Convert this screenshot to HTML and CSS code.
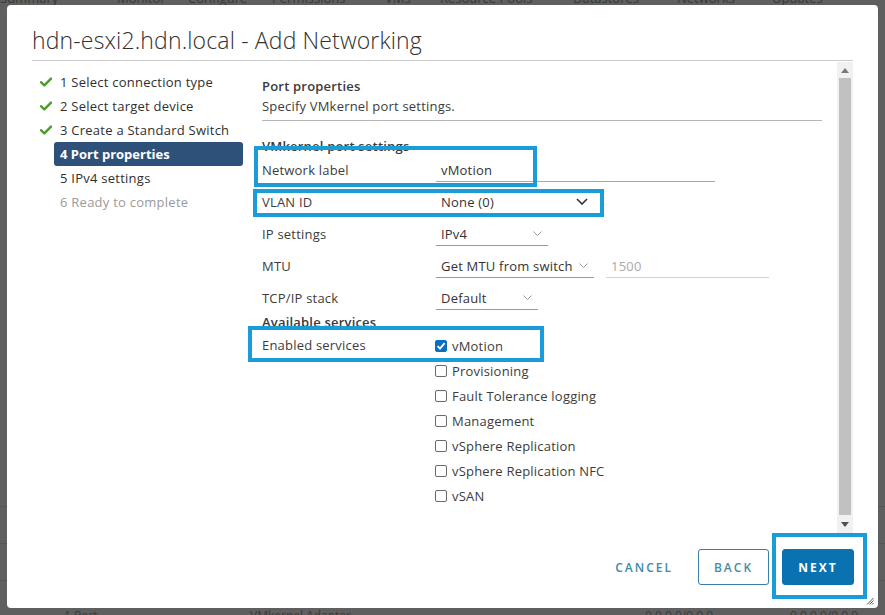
FILE: index.html
```html
<!DOCTYPE html>
<html>
<head>
<meta charset="utf-8">
<link rel="stylesheet" href="styles.css">
</head>
<body>
<div class="page">
  <div class="tabs">
    <span class="t1">Summary</span><span class="t2">Monitor</span><span class="t3">Configure</span><span class="t4">Permissions</span><span class="t5">VMs</span><span class="t6">Resource Pools</span><span class="t7">Datastores</span><span class="t8">Networks</span><span class="t9">Updates</span>
  </div>
  <div class="bg-rows">
    <div class="bg-row"></div>
    <div class="bg-row"></div>
    <div class="bg-row"></div>
  </div>
  <div class="bottom-strip">
    <span class="b1">1 Port...</span><span class="b2">VMkernel Adapter</span><span class="b3">0.0.0.0/0.0.0</span><span class="b4">0.0.0.0/0.0.0</span>
  </div>
</div>

<div class="dialog">
  <header class="dlg-head">
    <h1>hdn-esxi2.hdn.local - Add Networking</h1>
  </header>

  <div class="dlg-body">
    <nav class="steps">
      <div class="step done"><span class="chk"><svg viewBox="0 0 12 10" width="12" height="10"><path d="M1 5.2 L4.4 8.4 L11 1.6" fill="none" stroke="#4d9a2f" stroke-width="2.4" stroke-linecap="round" stroke-linejoin="round"/></svg></span><span class="lbl">1 Select connection type</span></div>
      <div class="step done"><span class="chk"><svg viewBox="0 0 12 10" width="12" height="10"><path d="M1 5.2 L4.4 8.4 L11 1.6" fill="none" stroke="#4d9a2f" stroke-width="2.4" stroke-linecap="round" stroke-linejoin="round"/></svg></span><span class="lbl">2 Select target device</span></div>
      <div class="step done"><span class="chk"><svg viewBox="0 0 12 10" width="12" height="10"><path d="M1 5.2 L4.4 8.4 L11 1.6" fill="none" stroke="#4d9a2f" stroke-width="2.4" stroke-linecap="round" stroke-linejoin="round"/></svg></span><span class="lbl">3 Create a Standard Switch</span></div>
      <div class="step active"><span class="chk"></span><span class="lbl">4 Port properties</span></div>
      <div class="step"><span class="chk"></span><span class="lbl">5 IPv4 settings</span></div>
      <div class="step disabled"><span class="chk"></span><span class="lbl">6 Ready to complete</span></div>
    </nav>

    <div class="pane">
      <div class="scroll">
        <div class="sec-title">Port properties</div>
        <div class="sec-desc">Specify VMkernel port settings.</div>

        <div class="group-title">VMkernel port settings</div>
        <div class="form-row">
          <div class="flabel">Network label</div>
          <div class="fval"><div class="input w-net">vMotion</div></div>
        </div>
        <div class="form-row">
          <div class="flabel">VLAN ID</div>
          <div class="fval"><div class="select w-vlan dark">None (0)<svg viewBox="0 0 12 7" width="12" height="7"><path d="M1 1 L6 6 L11 1" fill="none" stroke="#333" stroke-width="1.6"/></svg></div></div>
        </div>
        <div class="form-row">
          <div class="flabel">IP settings</div>
          <div class="fval"><div class="select w-ip">IPv4<svg viewBox="0 0 9 5" width="9" height="5"><path d="M0.5 0.5 L4.5 4.5 L8.5 0.5" fill="none" stroke="#9a9a9a" stroke-width="1"/></svg></div></div>
        </div>
        <div class="form-row">
          <div class="flabel">MTU</div>
          <div class="fval">
            <div class="select w-mtu">Get MTU from switch<svg viewBox="0 0 9 5" width="9" height="5"><path d="M0.5 0.5 L4.5 4.5 L8.5 0.5" fill="none" stroke="#9a9a9a" stroke-width="1"/></svg></div>
            <div class="input w-num muted">1500</div>
          </div>
        </div>
        <div class="form-row">
          <div class="flabel">TCP/IP stack</div>
          <div class="fval"><div class="select w-tcp">Default<svg viewBox="0 0 9 5" width="9" height="5"><path d="M0.5 0.5 L4.5 4.5 L8.5 0.5" fill="none" stroke="#9a9a9a" stroke-width="1"/></svg></div></div>
        </div>

        <div class="group-title second">Available services</div>
        <div class="services">
          <div class="flabel svc-label">Enabled services</div>
          <div class="svc-list">
            <label class="cb"><span class="box checked"><svg viewBox="0 0 12 12" width="12" height="12"><path d="M2.6 6.2 L5 8.6 L9.6 3.2" fill="none" stroke="#fff" stroke-width="1.8"/></svg></span>vMotion</label>
            <label class="cb"><span class="box"></span>Provisioning</label>
            <label class="cb"><span class="box"></span>Fault Tolerance logging</label>
            <label class="cb"><span class="box"></span>Management</label>
            <label class="cb"><span class="box"></span>vSphere Replication</label>
            <label class="cb"><span class="box"></span>vSphere Replication NFC</label>
            <label class="cb"><span class="box"></span>vSAN</label>
          </div>
        </div>
      </div>
      <div class="scrollbar">
        <div class="sb-arrow"><svg viewBox="0 0 8 5" width="8" height="5"><path d="M0 5 L4 0 L8 5 Z" fill="#7a7a7a"/></svg></div>
        <div class="sb-thumb"></div>
        <div class="sb-arrow down"><svg viewBox="0 0 8 5" width="8" height="5"><path d="M0 0 L4 5 L8 0 Z" fill="#505050"/></svg></div>
      </div>
    </div>
  </div>

  <footer class="dlg-foot">
    <button class="btn link">CANCEL</button>
    <button class="btn outline">BACK</button>
    <button class="btn primary">NEXT</button>
  </footer>

  <div class="grip"><svg viewBox="0 0 8 8" width="8" height="8"><path d="M7.5 1 L1 7.5 M7.5 3.5 L3.5 7.5 M7.5 6 L6 7.5" stroke="#555" stroke-width="1"/></svg></div>

  <div class="callout c1"></div>
  <div class="callout c2"></div>
  <div class="callout c3"></div>
  <div class="callout c4"></div>
</div>
</body>
</html>
```

FILE: styles.css
```css
html, body {
  margin: 0;
  padding: 0;
  width: 885px;
  height: 615px;
  overflow: hidden;
  font-family: "Open Sans", "Noto Sans", sans-serif;
}

body {
  position: relative;
  background: #5e5e5e;
}

/* dimmed page behind the modal */
.page {
  position: absolute;
  inset: 0;
  background: #5f5f5f;
}

.tabs {
  position: absolute;
  top: -10px;
  left: 0;
  height: 16px;
  font-size: 13px;
  line-height: 16px;
  color: #383838;
  white-space: nowrap;
}
.tabs span { position: absolute; top: 0; }
.t1 { left: 0; }
.t2 { left: 117px; }
.t3 { left: 188px; }
.t4 { left: 272px; }
.t5 { left: 385px; }
.t6 { left: 440px; }
.t7 { left: 573px; }
.t8 { left: 677px; }
.t9 { left: 772px; }

.bg-rows {
  position: absolute;
  left: 0;
  top: 470px;
  width: 885px;
}
.bg-row {
  height: 36px;
  border-bottom: 1px solid #555;
}

.bottom-strip {
  position: absolute;
  left: 0;
  top: 607px;
  width: 885px;
  font-size: 12px;
  line-height: 14px;
  color: #3a3a3a;
  white-space: nowrap;
}
.bottom-strip span { position: absolute; top: 2px; }
.b1 { left: 64px; }
.b2 { left: 250px; }
.b3 { left: 645px; }
.b4 { left: 790px; }

/* dialog */
.dialog {
  position: absolute;
  left: 7px;
  top: 5px;
  width: 871px;
  height: 603px;
  background: #fff;
  border-radius: 4px;
  display: flex;
  flex-direction: column;
  box-sizing: border-box;
}

.dlg-head {
  margin: 0 25px;
  padding-top: 21px;
  padding-bottom: 5px;
  border-bottom: 1px solid #cccccc;
}
.dlg-head h1 {
  margin: 0;
  font-size: 23px;
  line-height: 29px;
  font-weight: 300;
  letter-spacing: 0.15px;
  color: #313131;
}

.dlg-body {
  display: flex;
  height: 472px;
}

/* step navigation */
.steps {
  margin-left: 33px;
  width: 203px;
  padding-top: 9px;
  flex-shrink: 0;
}
.step {
  display: flex;
  align-items: center;
  height: 24px;
}
.chk {
  width: 14px;
  display: flex;
  align-items: center;
  flex-shrink: 0;
}
.lbl {
  flex: 1;
  height: 24px;
  line-height: 24px;
  padding-left: 6px;
  font-size: 13px;
  font-weight: 500;
  letter-spacing: 0.25px;
  color: #2f2f2f;
  border-radius: 3px;
  white-space: nowrap;
}
.step.active .lbl {
  background: #2e5179;
  color: #fff;
  font-weight: 700;
  letter-spacing: 0;
}
.step.disabled .lbl {
  color: #9a9a9a;
}

/* main pane */
.pane {
  display: flex;
  flex: 1;
  margin-left: 19px;
  margin-right: 25px;
  margin-top: 1px;
  height: 471px;
}
.scroll {
  flex: 1;
  padding-top: 14px;
  padding-right: 15px;
  color: #3c3c3c;
  font-size: 13px;
  letter-spacing: 0.2px;
}

.sec-title {
  line-height: 20px;
  font-weight: 600;
  color: #3a3a3a;
}
.sec-desc {
  line-height: 20px;
  padding-bottom: 4px;
  border-bottom: 1px solid #b5b5b5;
  color: #3c3c3c;
}
.group-title {
  margin-top: 17px;
  line-height: 16px;
  height: 16px;
  font-weight: 600;
  color: #3a3a3a;
}
.group-title.second {
  margin-top: 0;
}

.form-row {
  display: flex;
  align-items: center;
  height: 32px;
}
.flabel {
  width: 174px;
  flex-shrink: 0;
  color: #3c3c3c;
}
.fval {
  display: flex;
  align-items: center;
  gap: 12px;
}

.input,
.select {
  height: 24px;
  line-height: 24px;
  padding: 0 5px;
  box-sizing: border-box;
  border-bottom: 1px solid #9a9a9a;
  color: #333;
}
.input.w-net { width: 279px; border-bottom-color: #a8a8a8; }
.input.w-num { width: 163px; }
.input.muted { color: #aaaaaa; border-bottom-color: #d2d2d2; }

.select {
  display: flex;
  align-items: center;
  justify-content: space-between;
}
.select svg { flex-shrink: 0; }
.w-vlan { width: 160px; padding-right: 8px; }
.w-ip { width: 112px; padding-right: 6px; }
.w-mtu { width: 158px; padding-right: 6px; }
.w-tcp { width: 102px; padding-right: 6px; }

.services {
  display: flex;
  margin-top: 3px;
}
.svc-label {
  height: 25px;
  line-height: 25px;
}
.svc-list {
  display: flex;
  flex-direction: column;
  margin-left: -1px;
}
.cb {
  display: flex;
  align-items: center;
  gap: 5px;
  height: 25px;
  color: #3c3c3c;
}
.box {
  width: 12px;
  height: 12px;
  box-sizing: border-box;
  border: 1px solid #6a6a6a;
  border-radius: 2px;
  background: #fff;
  display: flex;
}
.box.checked {
  background: #0b6fc0;
  border-color: #0b6fc0;
}
.box.checked svg { margin: -1px; }

/* scrollbar */
.scrollbar {
  width: 16px;
  background: #f1f1f1;
  display: flex;
  flex-direction: column;
  flex-shrink: 0;
}
.sb-arrow {
  height: 16px;
  display: flex;
  align-items: center;
  justify-content: center;
}
.sb-arrow.down { height: 18px; }
.sb-thumb {
  flex: 1;
  margin: 0 2px;
  background: #c1c1c1;
}

/* footer */
.dlg-foot {
  display: flex;
  justify-content: flex-end;
  align-items: center;
  padding-top: 16px;
  padding-right: 24px;
  gap: 13px;
}
.btn {
  height: 36px;
  box-sizing: border-box;
  font-family: "Open Sans", "Noto Sans", sans-serif;
  font-size: 12px;
  font-weight: 600;
  letter-spacing: 2px;
  border-radius: 3px;
  padding: 0 12px;
  cursor: pointer;
}
.btn.link {
  background: transparent;
  border: none;
  color: #3d8aab;
  margin-right: 0;
}
.btn.outline {
  width: 71px;
  background: #fff;
  border: 1px solid #3a7fa3;
  color: #4a8aa8;
}
.btn.primary {
  width: 72px;
  background: #0a72b0;
  border: 1px solid #0a72b0;
  color: #fff;
  font-weight: 700;
}

.grip {
  position: absolute;
  right: 4px;
  bottom: 3px;
  width: 8px;
  height: 8px;
  display: flex;
}

/* highlight callouts drawn over the form */
.callout {
  position: absolute;
  box-sizing: border-box;
  border: 4px solid #1a9cd8;
  pointer-events: none;
}
.c1 { left: 247px; top: 141px; width: 283px; height: 41px; }
.c2 { left: 246px; top: 184px; width: 351px; height: 28px; }
.c3 { left: 241px; top: 321px; width: 296px; height: 36px; }
.c4 { left: 765px; top: 528px; width: 95px; height: 66px; }
```
